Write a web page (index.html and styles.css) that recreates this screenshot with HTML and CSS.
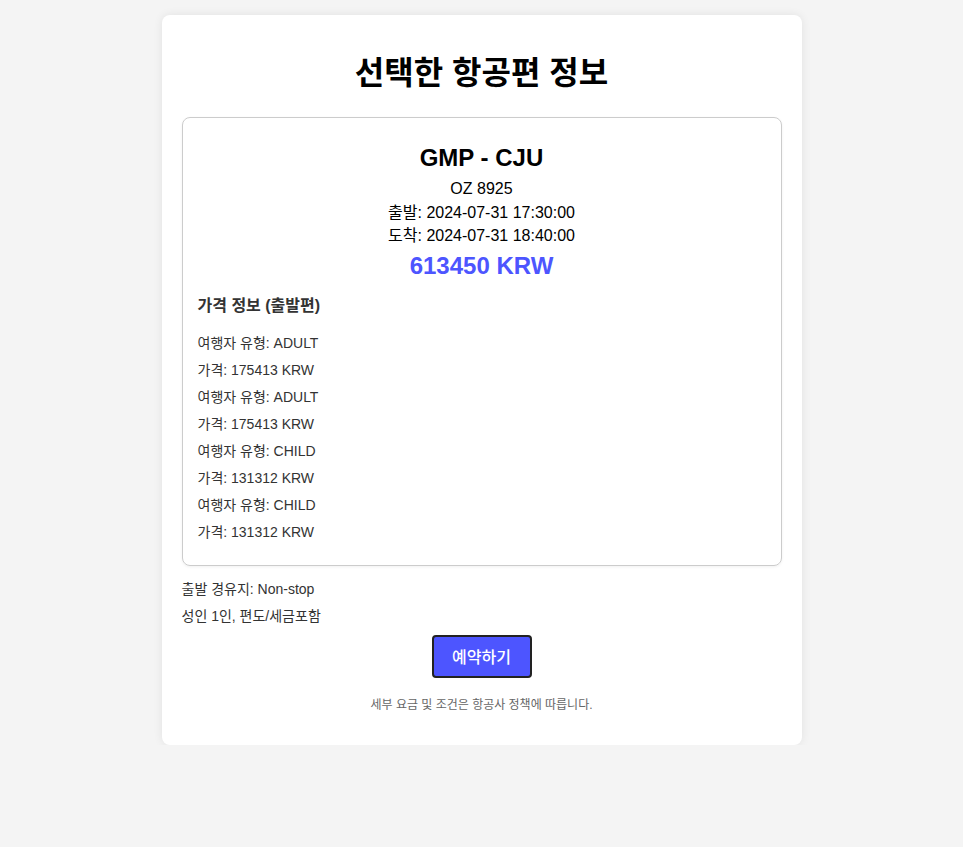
FILE: index.html
```html
<!DOCTYPE html>
<html lang="ko">
<head>
<meta charset="utf-8">
<title>선택한 항공편 정보</title>
<link rel="stylesheet" href="styles.css">
</head>
<body>
<div class="container">
  <h1 class="title">선택한 항공편 정보</h1>
  <div class="card">
    <h2 class="route">GMP - CJU</h2>
    <p class="info">OZ 8925</p>
    <p class="info">출발: 2024-07-31 17:30:00</p>
    <p class="info">도착: 2024-07-31 18:40:00</p>
    <p class="price">613450 KRW</p>
    <h3 class="section">가격 정보 (출발편)</h3>
    <p class="line">여행자 유형: ADULT</p>
    <p class="line">가격: 175413 KRW</p>
    <p class="line">여행자 유형: ADULT</p>
    <p class="line">가격: 175413 KRW</p>
    <p class="line">여행자 유형: CHILD</p>
    <p class="line">가격: 131312 KRW</p>
    <p class="line">여행자 유형: CHILD</p>
    <p class="line">가격: 131312 KRW</p>
  </div>
  <p class="line">출발 경유지: Non-stop</p>
  <p class="line">성인 1인, 편도/세금포함</p>
  <div class="actions">
    <button class="book">예약하기</button>
  </div>
  <p class="note">세부 요금 및 조건은 항공사 정책에 따릅니다.</p>
</div>
</body>
</html>
```
FILE: styles.css
```css
html, body {
  margin: 0;
  padding: 0;
}
body {
  background: #f4f4f4;
  font-family: "Liberation Sans", "Noto Sans CJK KR", Arial, sans-serif;
  color: #000;
  padding-top: 15px;
}
.container {
  width: 600px;
  margin: 0 auto;
  background: #fff;
  border-radius: 8px;
  padding: 20px;
  box-shadow: 0 0 10px rgba(0, 0, 0, 0.08);
}
.title {
  font-size: 32px;
  font-weight: bold;
  text-align: center;
  margin: 20px 0 25px;
  line-height: 37px;
}
.card {
  border: 1px solid #ccc;
  border-radius: 8px;
  padding: 15px;
  box-shadow: 0 1px 3px rgba(0, 0, 0, 0.06);
}
.route {
  font-size: 24px;
  font-weight: bold;
  text-align: center;
  margin: 11px 0 8px;
  line-height: 28px;
}
.info {
  font-size: 16px;
  text-align: center;
  margin: 5px 0;
  line-height: 18.5px;
}
.price {
  font-size: 24px;
  font-weight: bold;
  color: #4d55ff;
  text-align: center;
  margin: 6px 0 0;
  line-height: 28px;
}
.section {
  font-size: 16px;
  font-weight: bold;
  color: #333;
  margin: 17px 0 20px;
  line-height: 18px;
}
.line {
  font-size: 14px;
  color: #333;
  margin: 0 0 11px;
  line-height: 16px;
}
.card .line:last-child {
  margin-bottom: 10px;
}
.card + .line {
  margin-top: 15px;
}
.actions {
  display: flex;
  justify-content: center;
}
.book {
  width: 100px;
  height: 43px;
  background: #4d55ff;
  color: #fff;
  border: 2px solid #222;
  border-radius: 4px;
  font-family: "Liberation Sans", "Noto Sans CJK KR", Arial, sans-serif;
  font-size: 16px;
  font-weight: 500;
  padding: 0;
}
.note {
  font-size: 12px;
  color: #666;
  text-align: center;
  margin: 20px 0 13px;
  line-height: 14px;
}
```
